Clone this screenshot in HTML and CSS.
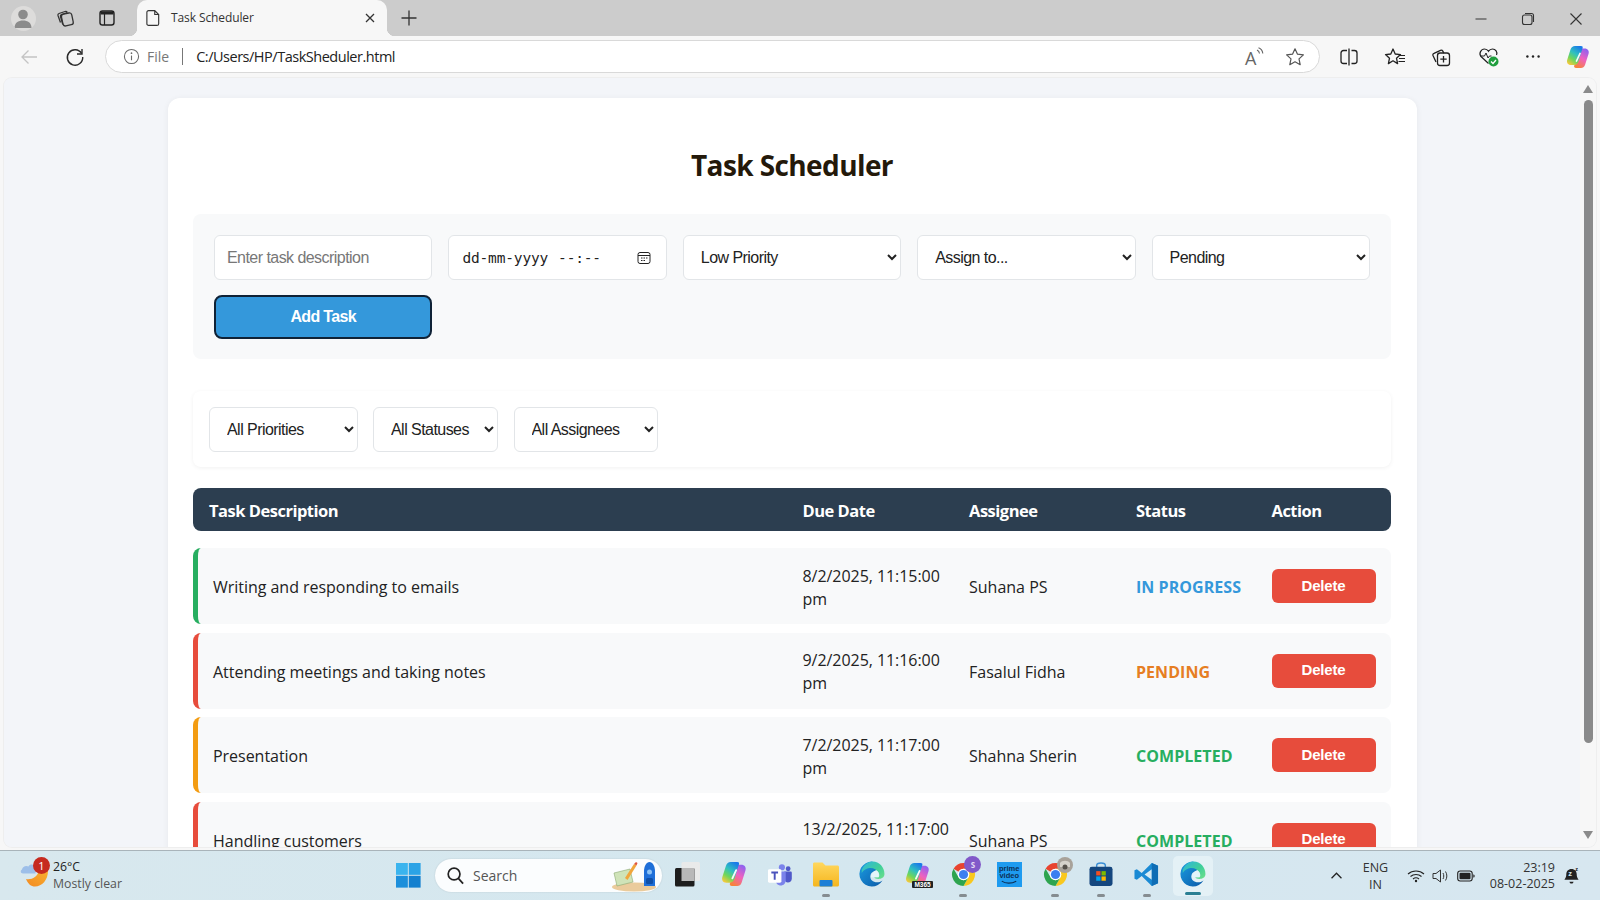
FILE: index.html
```html
<!DOCTYPE html>
<html lang="en">
<head>
<meta charset="utf-8">
<title>Task Scheduler</title>
<link rel="stylesheet" href="styles.css">
</head>
<body>
<svg class="defs" width="0" height="0">
  <defs>
    <linearGradient id="edgeA" x1="0" y1="0" x2="1" y2="1"><stop offset="0" stop-color="#2fb4e0"/><stop offset=".55" stop-color="#3fcf9a"/><stop offset="1" stop-color="#6fe08a"/></linearGradient>
    <linearGradient id="edgeB" x1="0" y1="0" x2="1" y2="1"><stop offset="0" stop-color="#1b9de2"/><stop offset="1" stop-color="#0b5aa8"/></linearGradient>
    <linearGradient id="cpA" x1=".75" y1="0" x2=".2" y2="1"><stop offset="0" stop-color="#1a78ea"/><stop offset=".4" stop-color="#2fc0c0"/><stop offset=".7" stop-color="#6fd65a"/><stop offset="1" stop-color="#f8c93a"/></linearGradient>
    <linearGradient id="cpB" x1=".8" y1="0" x2=".3" y2="1"><stop offset="0" stop-color="#8a62f2"/><stop offset=".5" stop-color="#ee62c0"/><stop offset="1" stop-color="#f7823a"/></linearGradient>
    <linearGradient id="folder" x1="0" y1="0" x2="0" y2="1"><stop offset="0" stop-color="#ffd75e"/><stop offset="1" stop-color="#f5b61e"/></linearGradient>
    <linearGradient id="moon" x1="1" y1="0" x2="0" y2="1"><stop offset="0" stop-color="#f9b030"/><stop offset="1" stop-color="#f28a22"/></linearGradient>
    <symbol id="edge" viewBox="0 0 24 24">
      <path d="M12 .5A11.500 11.500 0 1 0 21.700 18C18.500 20.500 14 20 12 18 10 16 10 13 11.500 11L20 6z" fill="url(#edgeB)"/>
      <path d="M2.500 8C4.500 3.500 8.500.5 12.500.5 19 .5 23.500 6 23.500 12c0 3.500-3 4.500-5.500 4.500-2 0-3.500-.5-4-1.500h4c1-1 1-2.500 0-4.500C16.500 8 13 6 9.500 6.500 7 7 4.500 8 2.500 11z" fill="url(#edgeA)"/>
      <path d="M11 15c0-4 3-6.500 5-6 2 .5 3 3.500 2 6z" fill="#e4f5fa"/>
    </symbol>
    <symbol id="chrome" viewBox="0 0 24 24">
      <path d="M12 1a11 11 0 0 1 9.530 5.500H12A5.500 5.500 0 0 0 7.240 9.250L2.470 6.500A11 11 0 0 1 12 1z" fill="#e8432f"/>
      <path d="M21.530 6.500A11 11 0 0 1 12 23l4.760-8.250A5.500 5.500 0 0 0 16.760 9.250 5.500 5.500 0 0 0 12 6.500z" fill="#f9c81e"/>
      <path d="M12 23A11 11 0 0 1 2.470 6.500l4.770 8.250A5.500 5.500 0 0 0 12 17.500a5.500 5.500 0 0 0 4.760-2.750z" fill="#2ea44f"/>
      <circle cx="12" cy="12" r="5.500" fill="#fff"/><circle cx="12" cy="12" r="4.400" fill="#3b7ff0"/>
    </symbol>
    <symbol id="copilot" viewBox="0 0 24 24">
      <path d="M15 3.500h3.500c3.500 0 5 2.500 4 5.500L19 20c-.7 2-2.200 3-4 3H10c-1.500 0-2.200-.9-1.800-2.200l4-13.500C12.800 5 13.500 3.500 15 3.500z" fill="url(#cpB)"/>
      <path d="M9 1h6c1.500 0 2 .8 1.600 2l-4 13c-.7 2.500-2.200 4-4.600 4H5C1.800 20 .3 17.500 1.300 14.500L4.500 4.500C5.300 2.200 6.800 1 9 1z" fill="url(#cpA)"/>
      <path d="M14 8.500l-3.500 7.500" stroke="#fff" stroke-width="1.700" stroke-linecap="round" opacity=".95"/>
    </symbol>
  </defs>
</svg>

<div class="window">
  <header class="tabstrip">
    <div class="strip-btn"><span class="avatar"><svg viewBox="0 0 24 24" width="24" height="24"><circle cx="12" cy="8.500" r="4.800" fill="#8b8b8b"/><path d="M3.500 22c0-5.200 3.800-7.500 8.500-7.500s8.500 2.300 8.500 7.500z" fill="#8b8b8b"/></svg></span></div>
    <div class="strip-btn"><svg class="ico" viewBox="0 0 20 20" width="20" height="20"><rect x="7" y="5.500" width="10.500" height="12" rx="2.500" transform="rotate(-12 12 11)" fill="none" stroke="#333" stroke-width="1.300"/><path d="M5.500 14.500L3 7.500c-.3-1 .2-1.700 1-2l6-2c1-.3 1.800 0 2.200.8M7.800 16.500L5.500 8.500c-.3-1 .2-1.700 1-2l6-1.800" fill="none" stroke="#333" stroke-width="1.300"/></svg></div>
    <div class="strip-btn"><svg class="ico" viewBox="0 0 20 20" width="20" height="20"><rect x="3" y="3" width="14" height="14" rx="2.500" fill="none" stroke="#222" stroke-width="1.400"/><path d="M3.500 3.500h13v3h-13z" fill="#222"/><path d="M7.500 6v11" stroke="#222" stroke-width="1.200"/></svg></div>
    <div class="tab">
      <svg viewBox="0 0 16 20" width="14" height="18"><path d="M2.500 1.500h7l4.500 4.500v10.500c0 1.200-.8 2-2 2h-9.500c-1.200 0-2-.8-2-2v-13c0-1.200.8-2 2-2zM9.500 1.500v4.500h4.500" transform="translate(.5 0)" fill="none" stroke="#333" stroke-width="1.300"/></svg>
      <span class="tab-title">Task Scheduler</span>
      <svg class="tab-close" viewBox="0 0 12 12" width="12" height="12"><path d="M2 2l8 8M10 2l-8 8" stroke="#333" stroke-width="1.300"/></svg>
    </div>
    <div class="strip-btn strip-new"><svg viewBox="0 0 18 18" width="18" height="18"><path d="M9 1.500v15M1.500 9h15" stroke="#333" stroke-width="1.300"/></svg></div>
    <div class="winctl">
      <span class="winbtn"><svg viewBox="0 0 14 14" width="14" height="14"><path d="M1.500 7h11" stroke="#444" stroke-width="1.100"/></svg></span>
      <span class="winbtn"><svg viewBox="0 0 14 14" width="14" height="14"><rect x="1.500" y="3" width="9.500" height="9.500" rx="2" fill="none" stroke="#333" stroke-width="1.100"/><path d="M4 1.500h6.500c1.300 0 2 .7 2 2V10" fill="none" stroke="#333" stroke-width="1.100"/></svg></span>
      <span class="winbtn winbtn-x"><svg viewBox="0 0 14 14" width="14" height="14"><path d="M1.500 1.500l11 11M12.500 1.500l-11 11" stroke="#333" stroke-width="1.100"/></svg></span>
    </div>
  </header>

  <nav class="toolbar">
    <div class="tool-btn"><svg viewBox="0 0 20 20" width="20" height="20"><path d="M18 10H3M9.500 3.500L3 10l6.500 6.500" fill="none" stroke="#c4c4c4" stroke-width="1.300"/></svg></div>
    <div class="tool-btn"><svg viewBox="0 0 20 20" width="20" height="20"><path d="M16.600 6.500A7.700 7.700 0 1 0 17.700 10" fill="none" stroke="#2a2a2a" stroke-width="1.400"/><path d="M17 2v5h-5" fill="none" stroke="#2a2a2a" stroke-width="1.400"/></svg></div>
    <div class="address">
      <svg class="addr-info" viewBox="0 0 18 18" width="17" height="17"><circle cx="9" cy="9" r="7.500" fill="none" stroke="#6a6a6a" stroke-width="1.100"/><path d="M9 8v5" stroke="#6a6a6a" stroke-width="1.200"/><circle cx="9" cy="5.500" r=".9" fill="#6a6a6a"/></svg>
      <span class="addr-file">File</span>
      <span class="addr-sep"></span>
      <span class="addr-url">C:/Users/HP/TaskSheduler.html</span>
      <span class="addr-tools">
        <span class="read-aloud"><span class="read-a">A</span><svg viewBox="0 0 8 10" width="8" height="10"><path d="M1 3c1.500.6 2.300 1.800 2.500 3.500M2.500 .8C5 1.800 6.500 3.600 6.800 6.500" fill="none" stroke="#666" stroke-width="1.100"/></svg></span>
        <svg viewBox="0 0 20 20" width="20" height="20"><path d="M10 1.800l2.500 5.400 5.900.7-4.400 4 1.200 5.800L10 14.800l-5.200 2.900L6 11.900l-4.400-4 5.900-.7z" fill="none" stroke="#555" stroke-width="1.200" stroke-linejoin="round"/></svg>
      </span>
    </div>
    <div class="tool-right">
      <div class="tool-btn"><svg viewBox="0 0 20 20" width="20" height="20"><path d="M8 3.500H4.500C3 3.500 2 4.500 2 6v8c0 1.500 1 2.500 2.500 2.500H8M12.500 3.500h3c1.500 0 2.500 1 2.500 2.500v8c0 1.500-1 2.500-2.500 2.500h-3M10 1.500v17" fill="none" stroke="#222" stroke-width="1.300"/></svg></div>
      <div class="tool-btn"><svg viewBox="0 0 22 20" width="22" height="20"><path d="M9 2l2.200 5 5.300.6-4 3.600 1.100 5.400L9 13.800l-4.600 2.800 1.100-5.400-4-3.600 5.300-.6z" fill="none" stroke="#222" stroke-width="1.300" stroke-linejoin="round"/><path d="M15 8.500h6M15 11.500h6M14.500 14.500h6.500" stroke="#222" stroke-width="1.100"/></svg></div>
      <div class="tool-btn"><svg viewBox="0 0 20 20" width="20" height="20"><rect x="6.500" y="6" width="12" height="12.500" rx="2.500" fill="none" stroke="#222" stroke-width="1.300"/><path d="M12.500 9v6.500M9.300 12.200h6.400" stroke="#222" stroke-width="1.300"/><path d="M5 15L2 8.500c-.4-1 0-1.800 1-2.200l6.500-3c1-.4 1.800-.1 2.300.8l1 2" fill="none" stroke="#222" stroke-width="1.300"/></svg></div>
      <div class="tool-btn tool-heart"><svg viewBox="0 0 22 22" width="22" height="22"><path d="M10.500 17.500L3 10.500C.5 7.500 3 3 6.500 3c2 0 3.200 1 4 2.300C11.300 4 12.700 3 14.500 3c3 0 5.300 3 4 6" fill="none" stroke="#222" stroke-width="1.200"/><path d="M2.500 10h4l1.500-3 2 5 1.500-2h2" fill="none" stroke="#222" stroke-width="1"/><circle cx="15.500" cy="15.500" r="5" fill="#1f9e3d"/><path d="M13 15.500l2 2 3-3.500" fill="none" stroke="#fff" stroke-width="1.300"/></svg></div>
      <div class="tool-btn"><svg viewBox="0 0 20 6" width="16" height="5"><circle cx="3" cy="3" r="1.500" fill="#222"/><circle cx="10" cy="3" r="1.500" fill="#222"/><circle cx="17" cy="3" r="1.500" fill="#222"/></svg></div>
      <div class="tool-btn tool-last"><svg width="24" height="24"><use href="#copilot"/></svg></div>
    </div>
  </nav>

  <div class="viewport">
    <main class="page">
      <div class="card">
        <h1 class="title">Task Scheduler</h1>

        <form class="task-form">
          <input class="field field-text" type="text" placeholder="Enter task description">
          <div class="field field-date">
            <span>dd-mm-yyyy</span><span class="time">--:--</span>
            <svg viewBox="0 0 14 14" width="14" height="14"><rect x="1" y="1.500" width="12" height="11" rx="2" fill="none" stroke="#222" stroke-width="1"/><path d="M1 4.500h12" stroke="#222"/><path d="M4 7h1.500M6.500 7H8M9 7h1.500M4 9.500h1.500M6.500 9.500H8" stroke="#222"/></svg>
          </div>
          <select class="field field-select"><option>Low Priority</option></select>
          <select class="field field-select"><option>Assign to...</option></select>
          <select class="field field-select"><option>Pending</option></select>
          <button class="add-btn" type="button">Add Task</button>
        </form>

        <div class="filters">
          <select class="field filter filter-p"><option>All Priorities</option></select>
          <select class="field filter filter-s"><option>All Statuses</option></select>
          <select class="field filter filter-a"><option>All Assignees</option></select>
        </div>

        <div class="thead">
          <span>Task Description</span><span>Due Date</span><span>Assignee</span><span>Status</span><span>Action</span>
        </div>

        <div class="rows">
          <div class="row row-green">
            <span class="cell-task">Writing and responding to emails</span>
            <span class="cell-date">8/2/2025, 11:15:00 pm</span>
            <span>Suhana PS</span>
            <span class="status st-progress">IN PROGRESS</span>
            <button class="del-btn" type="button">Delete</button>
          </div>
          <div class="row row-red">
            <span class="cell-task">Attending meetings and taking notes</span>
            <span class="cell-date">9/2/2025, 11:16:00 pm</span>
            <span>Fasalul Fidha</span>
            <span class="status st-pending">PENDING</span>
            <button class="del-btn" type="button">Delete</button>
          </div>
          <div class="row row-amber">
            <span class="cell-task">Presentation</span>
            <span class="cell-date">7/2/2025, 11:17:00 pm</span>
            <span>Shahna Sherin</span>
            <span class="status st-done">COMPLETED</span>
            <button class="del-btn" type="button">Delete</button>
          </div>
          <div class="row row-red">
            <span class="cell-task">Handling customers</span>
            <span class="cell-date">13/2/2025, 11:17:00 pm</span>
            <span>Suhana PS</span>
            <span class="status st-done">COMPLETED</span>
            <button class="del-btn" type="button">Delete</button>
          </div>
        </div>
      </div>
    </main>
    <aside class="scrollbar">
      <span class="sb-up"></span>
      <span class="sb-track"><span class="sb-thumb"></span></span>
      <span class="sb-down"></span>
    </aside>
  </div>

  <footer class="taskbar">
    <div class="weather">
      <span class="weather-ico">
        <svg viewBox="0 0 28 30" width="28" height="30"><path d="M6 18C12 19 17 16 19 10L28 10C28 19 22 25.500 15 25.500 11 25.500 8 23 6 18z" fill="url(#moon)"/><path d="M3 12.500C.5 12.500 0 9.500 2 8.500 2.500 5.500 6 4 8.500 5.500 10 2.500 15 3 15.500 7V12.500z" fill="#9dbfe9"/></svg>
        <b class="weather-badge">1</b>
      </span>
      <span class="weather-text"><span class="w-temp">26°C</span><span class="w-desc">Mostly clear</span></span>
    </div>
    <div class="start"><svg viewBox="0 0 26 26" width="25" height="25"><rect x="0" y="0" width="12.300" height="12.300" fill="#3ab4ee"/><rect x="13.300" y="0" width="12.300" height="12.300" fill="#2ba3e6"/><rect x="0" y="13.300" width="12.300" height="12.300" fill="#1c8fdb"/><rect x="13.300" y="13.300" width="12.300" height="12.300" fill="#1480cf"/></svg></div>
    <div class="search">
      <svg viewBox="0 0 20 20" width="19" height="19"><circle cx="8.500" cy="8.500" r="6.200" fill="none" stroke="#222" stroke-width="1.800"/><path d="M13 13l5 5.500" stroke="#222" stroke-width="1.800"/></svg>
      <span class="search-text">Search</span>
      <svg class="search-art" viewBox="0 0 46 32" width="46" height="32"><ellipse cx="23" cy="27" rx="22" ry="4.500" fill="#eacb9c"/><path d="M3 13l16-4 3 13-16 4z" fill="#cfe3b8" stroke="#8aa871" stroke-width=".6"/><path d="M14 18L23 4l2.500 1.500L16.500 20z" fill="#f0a63c"/><path d="M23 4l2-2 1.500 1-1 2.500z" fill="#e0553c"/><path d="M33 26V11c0-5 2.500-9 5.500-9S44 6 44 11v15z" fill="#1f6fd8"/><circle cx="38.500" cy="12" r="2.500" fill="#8cc2f5"/><rect x="35" y="18" width="7" height="6" rx="1.500" fill="#0f4fa8"/></svg>
    </div>
    <div class="apps">
      <div class="app"><svg viewBox="0 0 25 25" width="25" height="25"><rect x="6.500" y="0" width="18.500" height="19" rx="1.500" fill="#e9eaea"/><rect x="0" y="6" width="19.500" height="18.500" rx="1.500" fill="#1d1d1d"/><rect x="6.500" y="6" width="13" height="13" fill="#b8b8b8"/></svg></div>
      <div class="app"><svg width="26" height="26"><use href="#copilot"/></svg></div>
      <div class="app"><svg viewBox="0 0 26 26" width="25" height="25"><circle cx="15.500" cy="5.500" r="3.200" fill="#7b83eb"/><circle cx="22" cy="7" r="2.500" fill="#5059c9"/><path d="M18 10h6.500c.8 0 1.300.5 1.300 1.300v6c0 2.500-2 4-4 4s-3.800-1.500-3.800-4z" fill="#5059c9"/><path d="M9 10h10.500v9c0 3-2.300 5.500-5.200 5.500S9 22 9 19z" fill="#7b83eb"/><rect x="1" y="7.500" width="14" height="14" rx="1.500" fill="#fff"/><path d="M4.500 11h7M8 11v7.500" stroke="#4b53bc" stroke-width="2"/></svg></div>
      <div class="app app-run"><svg viewBox="0 0 26 26" width="26" height="26"><path d="M0 3c0-1 .6-1.500 1.500-1.500h8L12.500 4.500H24.500c.9 0 1.500.6 1.500 1.500v18c0 .9-.6 1.500-1.500 1.500h-23C.6 25.500 0 24.900 0 24z" fill="url(#folder)"/><rect x="6.500" y="19" width="13" height="6.500" rx="1" fill="#1c7fd6"/></svg></div>
      <div class="app"><svg width="26" height="26"><use href="#edge"/></svg></div>
      <div class="app app-badge"><svg width="25" height="25"><use href="#copilot"/></svg><span class="m365">M365</span></div>
      <div class="app app-run app-badge">
        <svg width="25" height="25"><use href="#chrome"/></svg>
        <span class="profile">S</span>
      </div>
      <div class="app"><div class="prime"><span>prime</span><span>video</span><svg viewBox="0 0 20 5" width="18" height="5"><path d="M2 1c4 3 11 3 16 0" fill="none" stroke="#0c2f55" stroke-width="1.300"/></svg></div></div>
      <div class="app app-run app-badge">
        <svg width="25" height="25"><use href="#chrome"/></svg>
        <svg class="profile-pic" viewBox="0 0 16 16" width="16" height="16"><circle cx="8" cy="8" r="8" fill="#a8a29a"/><path d="M3 6c2-3 8-3 10 0v4H3z" fill="#d6d2cb"/><circle cx="8" cy="10" r="2.500" fill="#55504a"/></svg>
      </div>
      <div class="app app-run"><svg viewBox="0 0 25 26" width="24" height="25"><path d="M8 6V3.500C8 2 9.500 1 12.500 1S17 2 17 3.500V6" fill="none" stroke="#3c8fd6" stroke-width="1.500"/><rect x="0.500" y="5" width="24" height="20" rx="2.500" fill="#14467e"/><rect x="7.500" y="9.500" width="4.500" height="4.500" fill="#f25022"/><rect x="13" y="9.500" width="4.500" height="4.500" fill="#7fba00"/><rect x="7.500" y="15" width="4.500" height="4.500" fill="#00a4ef"/><rect x="13" y="15" width="4.500" height="4.500" fill="#ffb900"/></svg></div>
      <div class="app app-run"><svg viewBox="0 0 26 26" width="25" height="25"><path d="M18.500 1L25 4v18l-6.500 3L8 14.500 3 18.500l-2.500-1.200V8.700L3 7.500l5 4z" fill="#1a8ad4"/><path d="M18.500 7.500L11 13l7.500 5.500z" fill="#d7ecf5"/><path d="M18.500 1L25 4v18l-6.500 3z" fill="#0f6db5"/></svg></div>
      <div class="app app-active"><svg width="26" height="26"><use href="#edge"/></svg></div>
    </div>
    <div class="tray">
      <div class="tray-caret"><svg viewBox="0 0 14 10" width="13" height="9"><path d="M1.500 8L7 2.500 12.500 8" fill="none" stroke="#222" stroke-width="1.400"/></svg></div>
      <div class="tray-lang"><span>ENG</span><span>IN</span></div>
      <div class="tray-ico"><svg viewBox="0 0 18 14" width="18" height="14"><path d="M1 5c4.500-4 11.500-4 16 0M3.500 7.500c3.100-2.700 7.900-2.700 11 0M6 10c1.700-1.400 4.300-1.400 6 0" fill="none" stroke="#222" stroke-width="1.100"/><circle cx="9" cy="12" r="1.200" fill="#222"/></svg></div>
      <div class="tray-ico"><svg viewBox="0 0 18 16" width="18" height="16"><path d="M1 5.500h3L8.500 2v12L4 10.500H1z" fill="none" stroke="#333" stroke-width="1"/><path d="M11 5c1 1.800 1 4.200 0 6M13.500 3.500c1.800 2.800 1.800 6.200 0 9" fill="none" stroke="#333" stroke-width="1"/></svg></div>
      <div class="tray-ico"><svg viewBox="0 0 18 12" width="18" height="12"><rect x=".7" y="1" width="14.500" height="10" rx="2.500" fill="none" stroke="#222" stroke-width="1.100"/><rect x="2.500" y="2.800" width="11" height="6.400" rx="1" fill="#222"/><path d="M16.300 4.500c1 0 1.300.5 1.300 1.500s-.3 1.500-1.300 1.500z" fill="#222"/></svg></div>
      <div class="tray-clock"><span>23:19</span><span>08-02-2025</span></div>
      <div class="tray-bell"><svg viewBox="0 0 18 20" width="17" height="19"><path d="M9 3c-3.500 0-5.500 2.500-5.500 5.500 0 3-.8 4.500-2 6h15c-1.200-1.500-2-3-2-6C14.500 5.500 12.500 3 9 3z" fill="#222"/><path d="M6.800 16.500h4.400c-.3 1.300-1.100 2-2.200 2s-1.900-.7-2.200-2z" fill="#222"/><text x="5.500" y="11" class="bell-z">z</text><text x="13" y="5" class="bell-z2">z</text></svg></div>
    </div>
  </footer>
</div>
</body>
</html>
```

FILE: styles.css
```css
* { box-sizing: border-box; }
html, body { margin: 0; height: 100%; overflow: hidden; }
body { font-family: "Open Sans", "Noto Sans", sans-serif; background: #f7f7f7; color: #222; }
.defs { position: absolute; }

.window { display: flex; flex-direction: column; height: 900px; width: 1600px; }

/* Tab strip */
.tabstrip { display: flex; align-items: stretch; height: 36px; background: #cccccc; padding-left: 2px; flex: none; }
.strip-btn { width: 42px; display: flex; align-items: center; justify-content: center; }
.strip-new { width: 44px; }
.avatar { width: 25px; height: 25px; border-radius: 50%; background: #dddcdb; display: flex; align-items: center; justify-content: center; overflow: hidden; }
.tab { position: relative; width: 250px; margin-left: 9px; background: #f7f7f7; border-radius: 10px 10px 0 0; display: flex; align-items: center; padding: 0 11px 0 9px; gap: 11px; }
.tab::before, .tab::after { content: ""; position: absolute; bottom: 0; width: 8px; height: 8px; }
.tab::before { left: -8px; background: radial-gradient(circle at 0 0, #ccc 8px, #f7f7f7 8.5px); }
.tab::after { right: -8px; background: radial-gradient(circle at 100% 0, #ccc 8px, #f7f7f7 8.5px); }
.tab-title { font-size: 12px; letter-spacing: -.1px; color: #333; flex: 1; padding-bottom: 2px; }
.winctl { display: flex; margin-left: auto; }
.winbtn { width: 47px; display: flex; align-items: center; justify-content: center; padding-top: 1px; }
.winbtn-x { width: 49px; }

/* Toolbar */
.toolbar { display: flex; align-items: center; height: 42px; padding: 0 0 1px 6px; background: #f7f7f7; flex: none; }
.tool-btn { width: 46px; height: 32px; display: flex; align-items: center; justify-content: center; flex: none; }
.tool-heart svg { margin-left: 3px; }
.address { width: 1215px; height: 33px; margin-left: 7px; background: #fff; border: 1.500px solid #d9d9d9; border-radius: 17px; display: flex; align-items: center; padding-left: 17px; font-size: 14.500px; flex: none; }
.addr-file { margin-left: 7px; color: #777; font-size: 14px; }
.addr-sep { width: 1px; height: 17px; background: #777; margin: 0 13px; }
.addr-url { color: #222; letter-spacing: -.48px; }
.addr-tools { margin-left: auto; display: flex; align-items: center; gap: 21px; padding-right: 14px; }
.read-aloud { display: flex; align-items: flex-start; width: 22px; height: 22px; padding-left: 3px; }
.read-aloud svg { margin-top: 1px; }
.read-a { font-size: 18px; line-height: 24px; color: #666; width: 11px; }
.tool-right { display: flex; margin-left: 6px; }
.tool-last { width: 44px; }

/* Viewport */
.viewport { display: flex; height: 769px; margin: 0 4px 3px; background: #f2f4f9; border-radius: 8px; overflow: hidden; flex: none; box-shadow: 0 0 0 1px #eeeeee; }
.page { flex: 1; overflow: hidden; padding: 20px 0 0 164px; background: #f3f5f9; }
.scrollbar { width: 16px; background: #f7f7f7; display: flex; flex-direction: column; align-items: center; }
.sb-up, .sb-down { width: 0; height: 0; border-left: 5.500px solid transparent; border-right: 5.500px solid transparent; }
.sb-up { margin-top: 7px; border-bottom: 8px solid #8b8b8b; }
.sb-down { margin-bottom: 8px; border-top: 8px solid #8b8b8b; }
.sb-track { flex: 1; display: block; width: 9px; padding-top: 7px; }
.sb-thumb { display: block; height: 643px; width: 9px; border-radius: 5px; background: #8a8a8a; }

/* Card */
.card { width: 1249px; height: 900px; background: #fff; border-radius: 12px; padding: 45px 26px 25px 25px; box-shadow: 0 1px 6px rgba(0,0,0,.06); }
.title { margin: 0 0 27px; font-size: 28px; letter-spacing: -.6px; line-height: 44px; font-weight: 700; text-align: center; color: #24190a; }

.task-form { background: #f8f9fa; border-radius: 8px; padding: 21px 21px 20px 21px; display: grid; grid-template-columns: repeat(5, 1fr); grid-template-rows: 45px 44px; gap: 15px 16px; }
.field { font-family: "Liberation Sans", Arial, sans-serif; font-size: 16px; letter-spacing: -.55px; background: #fff; border: 1px solid #e2e5e8; border-radius: 6px; color: #222; outline: none; height: 45px; width: 100%; }
.field-text { padding: 0 12px; }
.field-text::placeholder { color: #777; opacity: 1; }
.field-date { display: flex; align-items: center; padding: 0 15px 0 13px; font: 14.500px "DejaVu Sans Mono", "Liberation Mono", monospace; letter-spacing: -.16px; }
.field-date .time { margin-left: 10px; }
.field-date svg { margin-left: auto; }
.field-select { padding: 0 0 0 13px; }
.add-btn { grid-column: 1; height: 44px; background: #3498db; color: #fff; font: 700 16px "Liberation Sans", Arial, sans-serif; letter-spacing: -.65px; border: 2px solid #0f2236; border-radius: 8px; }

.filters { margin-top: 32px; height: 76px; background: #fff; border-radius: 8px; box-shadow: 0 1px 4px rgba(0,0,0,.06); padding: 16px; display: flex; gap: 15.500px; }
.filter { height: 45px; padding-left: 13px; }
.filter-p { width: 148.500px; }
.filter-s { width: 125px; }
.filter-a { width: 144px; }

.thead, .row { display: grid; align-items: center; }
.thead { margin-top: 21px; height: 43px; background: #2c3e50; color: #fff; border-radius: 8px; font-weight: 700; font-size: 16.500px; letter-spacing: -.5px; grid-template-columns: 609.500px 166.500px 167px 135.500px 1fr; padding-top: 2px; }
.thead span:first-child { padding-left: 16px; }

.rows { margin-top: 17px; display: flex; flex-direction: column; gap: 8.600px; }
.row { height: 76px; background: #f8f9fa; border-radius: 8px; border-left: 5px solid; grid-template-columns: 604.500px 166.500px 167px 135.500px 1fr; font-size: 16px; color: #222; }
.row > span { padding-top: 2px; }
.cell-task { padding-left: 15px; letter-spacing: -.03px; }
.row > .cell-date { line-height: 23px; padding-right: 8px; padding-top: 3px; letter-spacing: -.05px; }
.row-green { border-left-color: #27ae60; }
.row-red { border-left-color: #e74c3c; }
.row-amber { border-left-color: #f39c12; }
.status { font-weight: 700; letter-spacing: .05px; }
.st-progress { color: #3498db; }
.st-pending { color: #e67e22; }
.st-done { color: #27ae60; }
.del-btn { width: 104px; height: 34px; background: #e74c3c; color: #fff; border: 0; border-radius: 6px; font: 700 15px "Liberation Sans", Arial, sans-serif; letter-spacing: -.2px; padding: 0 0 2px; }

/* Taskbar */
.taskbar { display: flex; align-items: center; height: 50px; flex: none; border-top: 1px solid #a9b4ba; background: linear-gradient(90deg, #d8e8ee, #d4e7ef 50%, #d7e7f0); }
.weather { width: 385px; padding-left: 20px; display: flex; align-items: center; gap: 5px; font-size: 12.300px; }
.weather-ico { position: relative; width: 28px; height: 30px; display: block; }
.weather-badge { position: absolute; left: 13px; top: -4px; width: 17px; height: 17px; border-radius: 50%; background: #c62a1f; color: #fff; font: 400 11px/17px "Open Sans", sans-serif; text-align: center; }
.weather-text { display: flex; flex-direction: column; line-height: 17px; padding-bottom: 2px; }
.w-temp { color: #222; }
.w-desc { color: #555; }
.start { width: 46px; display: flex; justify-content: center; }
.search { width: 227px; height: 33px; margin-left: 4px; border-radius: 17px; background: #fbfdfe; display: flex; align-items: center; padding-left: 11px; box-shadow: 0 0 2px rgba(0,0,0,.12); }
.search-text { margin-left: 8px; font-size: 14px; color: #555; }
.search-art { margin-left: auto; margin-right: 5px; }
.apps { display: flex; margin-left: 3px; height: 100%; align-items: center; }
.app { position: relative; width: 45.900px; height: 40px; padding-bottom: 3px; display: flex; align-items: center; justify-content: center; }
.app-run::after { content: ""; position: absolute; bottom: -1px; left: 19px; width: 8px; height: 3px; border-radius: 2px; background: #858c90; }
.app-active { background: #e4f1f6; border-radius: 5px; width: 40px; margin-left: 3px; }
.app-active::after { content: ""; position: absolute; bottom: 1px; left: 12px; width: 16px; height: 3px; border-radius: 2px; background: #2a7f93; }
.m365 { position: absolute; left: 18px; bottom: 8px; background: #222; color: #fff; font: 700 6.500px/7px "Liberation Sans", sans-serif; padding: 0 2px; border-radius: 1px; }
.profile { position: absolute; left: 24px; top: 0; width: 17px; height: 17px; border-radius: 50%; background: #8159c9; color: #e4dbf4; font: 700 8px/17px "Open Sans", sans-serif; text-align: center; }
.profile-pic { position: absolute; left: 25px; top: 1px; }
.prime { width: 25px; height: 25px; background: #1e9bf0; display: flex; flex-direction: column; align-items: center; color: #0c2f55; font: 700 7.500px/7.500px "Liberation Sans", sans-serif; padding-top: 3px; }
.tray { margin-left: auto; display: flex; align-items: center; padding-right: 13px; }
.tray-caret { width: 24px; display: flex; justify-content: center; }
.tray-lang { width: 55px; display: flex; flex-direction: column; align-items: center; font-size: 12.500px; line-height: 17px; color: #333; }
.tray-ico { width: 25px; display: flex; justify-content: center; }
.tray-clock { width: 77px; display: flex; flex-direction: column; align-items: flex-end; font-size: 12.500px; line-height: 16px; color: #333; }
.tray-bell { width: 32px; display: flex; justify-content: center; }
.bell-z { font: 700 8px "Liberation Sans", sans-serif; fill: #d4e7ef; }
.bell-z2 { font: 700 6px "Liberation Sans", sans-serif; fill: #222; }
```
